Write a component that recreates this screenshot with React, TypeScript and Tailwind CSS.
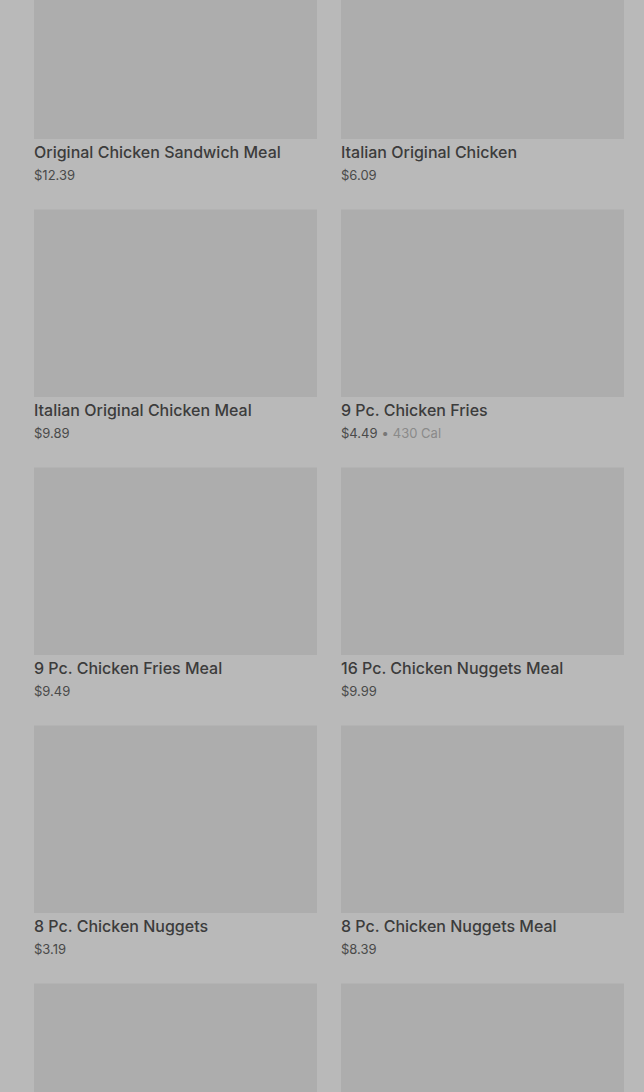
const items = [
  { name: "Original Chicken Sandwich Meal", price: "$12.39" },
  { name: "Italian Original Chicken", price: "$6.09" },
  { name: "Italian Original Chicken Meal", price: "$9.89" },
  { name: "9 Pc. Chicken Fries", price: "$4.49", cal: "430 Cal" },
  { name: "9 Pc. Chicken Fries Meal", price: "$9.49" },
  { name: "16 Pc. Chicken Nuggets Meal", price: "$9.99" },
  { name: "8 Pc. Chicken Nuggets", price: "$3.19" },
  { name: "8 Pc. Chicken Nuggets Meal", price: "$8.39" },
];

export default function App() {
  return (
    <div
      className="h-[1092px] overflow-hidden bg-[#b9b9b9]"
      style={{ fontFamily: "Inter, 'Noto Sans', sans-serif" }}
    >
      <div className="-mt-[49px] grid grid-cols-2 gap-x-[24px] pl-[34px] pr-[20px]">
        {items.map((item) => (
          <div key={item.name} className="flex flex-col pb-[24px]">
            <div className="h-[188px] w-full border-t border-[#b3b3b3] bg-[#adadad]" />
            <h2 className="mt-[3px] text-[16px] leading-[20px] font-medium text-[#3c3c3c]">
              {item.name}
            </h2>
            <p className="mt-[3px] text-[13px] leading-[20px] text-[#4a4a4a]">
              {item.price}
              {item.cal && (
                <>
                  <span className="mx-[4px] text-[#777]">•</span>
                  <span className="text-[#8a8a8a]">{item.cal}</span>
                </>
              )}
            </p>
          </div>
        ))}
        {/* next row, still loading below the fold */}
        <div className="h-[188px] w-full border-t border-[#b3b3b3] bg-[#adadad]" />
        <div className="h-[188px] w-full border-t border-[#b3b3b3] bg-[#adadad]" />
      </div>
    </div>
  );
}
